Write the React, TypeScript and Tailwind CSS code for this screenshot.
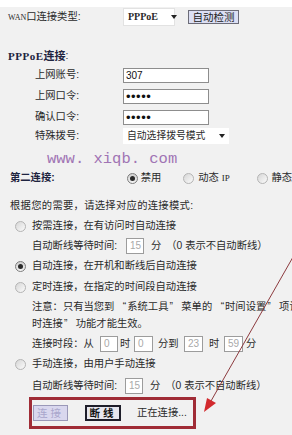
import React from "react";

const cjk = "font-['Liberation_Sans','Noto_Sans_CJK_SC',sans-serif]";

function Radio({ checked }: { checked?: boolean }) {
  if (checked) {
    return (
      <span className="w-[11px] h-[11px] rounded-full border border-[#7d7d7d] bg-gradient-to-b from-[#cfcfcf] to-[#f4f4f4] flex items-center justify-center shrink-0">
        <span className="w-[5px] h-[5px] rounded-full bg-[#2a2a2a]" />
      </span>
    );
  }
  return (
    <span className="w-[11px] h-[11px] rounded-full border border-[#b4b4b4] bg-gradient-to-br from-[#d6d6d6] to-[#fbfbfb] shrink-0" />
  );
}

function Box({ value, w = "w-[18px]" }: { value: string; w?: string }) {
  return (
    <span
      className={`${w} h-[16px] border border-[#9c9c9c] bg-white text-[#a9a9a9] text-[10px] leading-none flex items-center pl-[3px] shrink-0`}
    >
      {value}
    </span>
  );
}

function Caret() {
  return (
    <span className="w-0 h-0 border-l-[3.5px] border-r-[3.5px] border-t-[4px] border-l-transparent border-r-transparent border-t-[#222] shrink-0" />
  );
}

// full-width quote mark, as the router page's font draws it
function Q({ open }: { open?: boolean }) {
  return (
    <span className={`inline-block w-[10px] ${open ? "text-right pr-[1px]" : "text-left pl-[1px]"}`}>
      {open ? "“" : "”"}
    </span>
  );
}

export default function App() {
  return (
    <div
      className={`relative w-[292px] h-[435px] overflow-hidden bg-[#f1f1f1] text-[#2a2a2a] text-[10.3px] leading-none whitespace-nowrap ${cjk}`}
    >
      <div className="h-[7px] bg-white" />

      {/* WAN type */}
      <div className="h-[20px] flex items-center pl-[8px]">
        <span className="w-[115px]">
          <span className="text-[8px] font-['Liberation_Serif',serif]">WAN</span>口连接类型:
        </span>
        <span className="w-[52px] h-[18px] bg-white border border-[#e2e2e2] flex items-center pl-[4px] gap-[13px]">
          <span className="text-[10px] font-semibold font-['Liberation_Serif',serif]">PPPoE</span>
          <Caret />
        </span>
        <span className="ml-[13px] w-[51px] h-[14px] border border-[#6c6c78] bg-[#dcdff4] flex items-center justify-center text-[10.5px] text-[#222]">
          自动检测
        </span>
      </div>

      <div className="h-[20px]" />

      {/* PPPoE */}
      <div className="h-[18px] flex items-center pl-[8px] font-bold text-[#1e2440]">
        <span className="font-['Liberation_Serif',serif] text-[11px] tracking-[0.5px]">PPPoE</span>
        <span className="text-[11px]">连接</span>
        <span className="font-normal">:</span>
      </div>

      <div className="h-[21px] flex items-center pl-[35px]">
        <span className="w-[88px]">上网账号:</span>
        <span className="w-[86px] h-[15px] bg-white border border-[#8d8d8d] flex items-center pl-[2px] text-[10px] text-[#111]">
          307
        </span>
      </div>
      <div className="h-[21px] flex items-center pl-[35px]">
        <span className="w-[88px]">上网口令:</span>
        <span className="w-[86px] h-[15px] bg-white border border-[#8d8d8d] flex items-center pl-[2px] text-[13px] tracking-[0.5px] text-[#111] font-['Liberation_Sans',sans-serif]">
          •••••
        </span>
      </div>
      <div className="h-[21px] flex items-center pl-[35px]">
        <span className="w-[88px]">确认口令:</span>
        <span className="w-[86px] h-[15px] bg-white border border-[#8d8d8d] flex items-center pl-[2px] text-[13px] tracking-[0.5px] text-[#111] font-['Liberation_Sans',sans-serif]">
          •••••
        </span>
      </div>
      <div className="h-[16px] flex items-center pl-[35px]">
        <span className="w-[88px]">特殊拨号:</span>
        <span className="w-[106px] h-[16px] bg-white flex items-center pl-[4px] text-[9.8px]">
          <span className="w-[92px]">自动选择拨号模式</span>
          <Caret />
        </span>
      </div>

      {/* watermark */}
      <div className="h-[26px] flex items-center pl-[47px] pt-[5px] text-[15.5px] text-[#a074b4] font-['Liberation_Mono',monospace]">
        www. xiqb. com
      </div>

      {/* second connection */}
      <div className="h-[16px] flex items-center pl-[10px]">
        <span className="w-[118px] font-bold text-[#1e2440]">第二连接:</span>
        <span className="w-[57px] flex items-center gap-[3px]">
          <Radio checked />
          <span>禁用</span>
        </span>
        <span className="w-[75px] flex items-center gap-[4px]">
          <Radio />
          <span>
            动态 <span className="font-['Liberation_Serif',serif] text-[9px]">IP</span>
          </span>
        </span>
        <span className="flex items-center gap-[3px]">
          <Radio />
          <span>静态</span>
        </span>
      </div>

      <div className="h-[10px]" />

      <div className="h-[20px] flex items-center pl-[10px] tracking-[0.3px]">根据您的需要，请选择对应的连接模式:</div>

      <div className="h-[20px] flex items-center pl-[15px] gap-[6px]">
        <Radio />
        <span>按需连接，在有访问时自动连接</span>
      </div>
      <div className="h-[20px] flex items-center pl-[32px]">
        <span className="w-[94px]">自动断线等待时间:</span>
        <Box value="15" />
        <span className="ml-[7px]">分</span>
        <span className="ml-[5px]">（0 表示不自动断线）</span>
      </div>
      <div className="h-[20px] flex items-center pl-[15px] gap-[6px]">
        <Radio checked />
        <span>自动连接，在开机和断线后自动连接</span>
      </div>
      <div className="h-[22px] flex items-center pl-[15px] gap-[6px]">
        <Radio />
        <span>定时连接，在指定的时间段自动连接</span>
      </div>
      <div className="pl-[32px] leading-[17px]">
        <div>
          注意：只有当您到 <Q open />系统工具<Q /> 菜单的 <Q open />时间设置<Q /> 项设置定
        </div>
        <div>
          时连接<Q /> 功能才能生效。
        </div>
      </div>
      <div className="h-[2px]" />
      <div className="h-[20px] flex items-center pl-[32px]">
        <span className="w-[68px]">连接时段：从</span>
        <Box value="0" />
        <span className="ml-[2px] w-[14px]">时</span>
        <Box value="0" w="w-[19px]" />
        <span className="ml-[5px] w-[26px]">分到</span>
        <Box value="23" w="w-[19px]" />
        <span className="ml-[6px] w-[15px]">时</span>
        <Box value="59" w="w-[19px]" />
        <span className="ml-[3px]">分</span>
      </div>
      <div className="h-[20px] flex items-center pl-[15px] gap-[6px]">
        <Radio />
        <span>手动连接，由用户手动连接</span>
      </div>
      <div className="h-[2px]" />
      <div className="h-[20px] flex items-center pl-[32px]">
        <span className="w-[93px]">自动断线等待时间:</span>
        <Box value="15" />
        <span className="ml-[7px]">分</span>
        <span className="ml-[5px]">（0 表示不自动断线）</span>
      </div>

      {/* action box */}
      <div className="mt-[1px] ml-[29px] w-[167px] h-[32px] border-[3px] border-[#a02c36] flex items-center pl-[1px]">
        <span className="w-[35px] h-[16px] border border-[#9a98b8] bg-[#d9d7ee] text-[#a9a6cc] flex items-center justify-center tracking-[3px] text-[10.5px]">
          连接
        </span>
        <span className="ml-[17px] w-[36px] h-[16px] border-2 border-[#1e1e2a] bg-[#e6e6ee] text-[#111] font-bold flex items-center justify-center tracking-[3px] text-[10.5px]">
          断线
        </span>
        <span className="ml-[16px]">正在连接...</span>
      </div>

      {/* red arrow */}
      <svg className="absolute inset-0 pointer-events-none" width="292" height="435" viewBox="0 0 292 435">
        <line x1="297" y1="250" x2="211" y2="401" stroke="#8c3a3e" strokeWidth="1" />
        <polygon points="204,412 207,398 216,403" fill="#d22a2e" />
      </svg>
    </div>
  );
}
